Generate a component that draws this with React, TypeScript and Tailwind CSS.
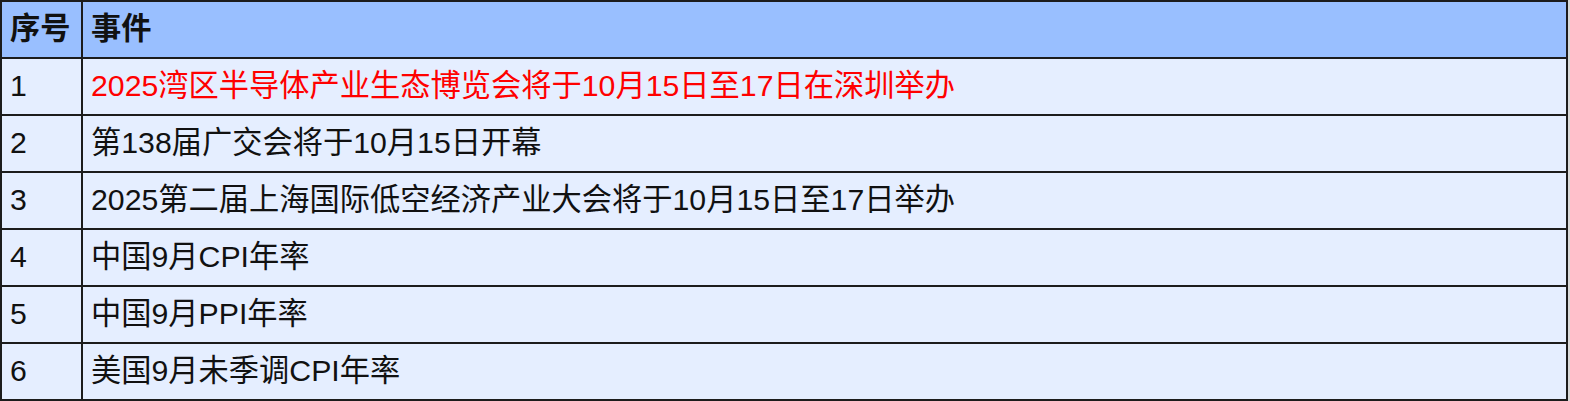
const rows = [
  { id: 1, text: "2025湾区半导体产业生态博览会将于10月15日至17日在深圳举办", hot: true },
  { id: 2, text: "第138届广交会将于10月15日开幕" },
  { id: 3, text: "2025第二届上海国际低空经济产业大会将于10月15日至17日举办" },
  { id: 4, text: "中国9月CPI年率" },
  { id: 5, text: "中国9月PPI年率" },
  { id: 6, text: "美国9月未季调CPI年率" },
  { id: 7, text: "美国9月季调后CPI月率" },
];

export default function App() {
  return (
    <div className="w-[1570px] bg-[#d9d9d9] font-['Liberation_Sans','Noto_Sans_CJK_SC',sans-serif]">
      <table className="w-[1568px] table-fixed border-collapse text-[30.25px] leading-none text-[#111]">
        <colgroup>
          <col className="w-[81px]" />
          <col />
        </colgroup>
        <thead>
          <tr className="h-[57px] bg-[#99bfff]">
            <th className="border-2 border-[#1c1c1c] px-2 text-left font-bold">序号</th>
            <th className="border-2 border-[#1c1c1c] px-2 text-left font-bold">事件</th>
          </tr>
        </thead>
        <tbody>
          {rows.map((row) => (
            <tr key={row.id} className="h-[57px] bg-[#e5eeff]">
              <td className="border-2 border-[#1c1c1c] px-2">{row.id}</td>
              <td
                className={
                  row.hot
                    ? "border-2 border-[#1c1c1c] px-2 text-[#ff0000]"
                    : "border-2 border-[#1c1c1c] px-2"
                }
              >
                {row.text}
              </td>
            </tr>
          ))}
        </tbody>
      </table>
    </div>
  );
}
